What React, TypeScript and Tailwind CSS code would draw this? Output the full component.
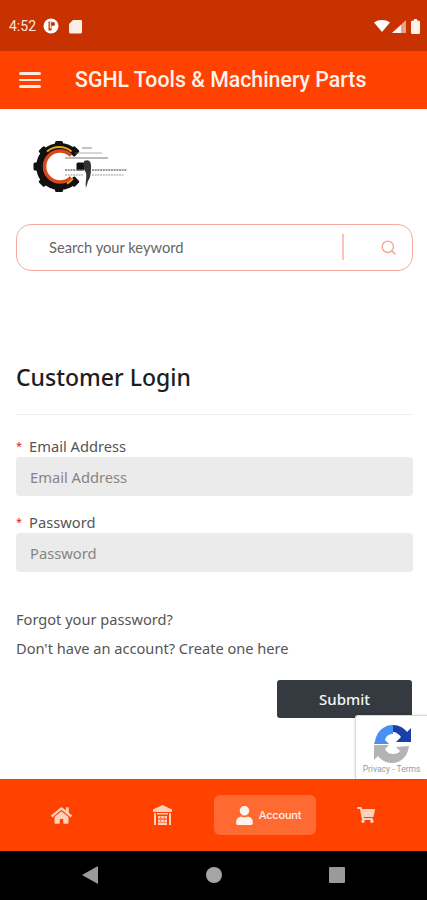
import { FaHome, FaShoppingCart, FaUser } from "react-icons/fa";
import { FiSearch } from "react-icons/fi";

function StatusLeftIcons() {
  return (
    <div className="flex items-center gap-[10px]">
      <svg width="16" height="16" viewBox="0 0 16 16">
        <circle cx="8" cy="8" r="7.5" fill="#fff" />
        <path d="M5.5 3.5h3v9h-3z" fill="#c83200" />
        <circle cx="10" cy="6" r="2" fill="#c83200" />
        <path d="M6.8 3.5h1v7h-1z" fill="#fff" />
      </svg>
      <svg width="13" height="15" viewBox="0 0 13 15">
        <path d="M4 1h8a1 1 0 0 1 1 1v11a1.5 1.5 0 0 1-1.5 1.5h-10A1.5 1.5 0 0 1 0 13V5z" fill="#fbeee8" />
      </svg>
    </div>
  );
}

function StatusRightIcons() {
  return (
    <div className="flex items-center gap-[2px]">
      <svg width="16" height="12" viewBox="0 0 16 12">
        <path d="M0 2.5C4.5-.8 11.5-.8 16 2.5L8 12z" fill="#fff" />
      </svg>
      <svg width="14" height="13" viewBox="0 0 14 13">
        <path d="M14 0v13H0z" fill="#fff" fillOpacity="0.55" />
        <path d="M9 5v8H0z" fill="#fff" fillOpacity="0.9" />
      </svg>
      <svg width="9" height="15" viewBox="0 0 9 15" className="ml-[3px]">
        <path d="M3 0h3v1.5h1.5A1.5 1.5 0 0 1 9 3v10.5A1.5 1.5 0 0 1 7.5 15h-6A1.5 1.5 0 0 1 0 13.5V3a1.5 1.5 0 0 1 1.5-1.5H3z" fill="#fdf1ec" />
      </svg>
    </div>
  );
}

function Logo() {
  return (
    <svg width="100" height="56" viewBox="0 0 100 56">
      <g transform="translate(29 29.5)">
        {[0, 45, 90, 135, 180, 225, 270, 315].map((a) => (
          <rect key={a} x="-4" y="-25.5" width="8" height="8" rx="1.5" fill="#111" transform={`rotate(${a})`} />
        ))}
        <path d="M15 -14 A20 20 0 1 0 15 14" fill="none" stroke="#111" strokeWidth="7" />
        <path d="M12 -11 A15.5 15.5 0 1 0 12 11" fill="none" stroke="#d9481a" strokeWidth="3.5" />
        <path d="M12.5 -15 A19 19 0 0 0 -12 -15" fill="none" stroke="#eda41c" strokeWidth="2.2" />
        <path d="M8 17 A18 18 0 0 0 14 12" fill="none" stroke="#eda41c" strokeWidth="2" />
      </g>
      <path d="M52 11h10" stroke="#555" strokeWidth="1" opacity="0.7" />
      <path d="M45 16h27" stroke="#777" strokeWidth="1" opacity="0.6" />
      <path d="M35 21h43" stroke="#444" strokeWidth="1" opacity="0.7" />
      <path d="M54 24c5-2 7 0 7 5 0 6 0 11-3 15l-2 7c-1-6 1-10 0-15-2-3-3-8-2-12z" fill="#333" />
      <path d="M35 33h18M62 33h35" stroke="#777" strokeWidth="1.3" strokeDasharray="2 0.7" />
      <path d="M35 38h18M62 38h32" stroke="#888" strokeWidth="1.2" strokeDasharray="2 0.7" opacity="0.8" />
    </svg>
  );
}

function Warehouse() {
  return (
    <svg width="19" height="20" viewBox="0 0 19 20" fill="#ffd0bd">
      <path d="M9.5 0 19 4.5V7H0V4.5z" />
      <path d="M1 8h2v12H1zM16 8h2v12h-2zM4 8h11v1.5H4z" />
      <path d="M5 11h2.6v2.6H5zM8.2 11h2.6v2.6H8.2zM11.4 11h2.6v2.6h-2.6zM5 14.4h2.6V17H5zM8.2 14.4h2.6V17H8.2zM11.4 14.4h2.6V17h-2.6zM5 17.4h9V20H5z" />
    </svg>
  );
}

function Field({ label }: { label: string }) {
  return (
    <div className="flex flex-col">
      <label className="flex h-[21px] items-center text-[14.7px] leading-[21px] text-[#555]">
        <span className="mb-[3px] w-[13px] text-[11px] leading-none text-[#e02020]">*</span>
        {label}
      </label>
      <input
        readOnly
        placeholder={label}
        className="h-[39px] w-full rounded-[4px] bg-[#ebebeb] px-[14px] text-[14.7px] text-[#777] placeholder:text-[#858585]"
      />
    </div>
  );
}

export default function App() {
  return (
    <div className="flex h-[900px] w-[427px] flex-col overflow-hidden bg-white font-['Noto_Sans',sans-serif]">
      <div className="flex h-[51px] items-center justify-between bg-[#c83200] pl-[9px] pr-[7px] pt-[1px] font-['Roboto',sans-serif]">
        <div className="flex items-center gap-[7px]">
          <span className="text-[14px] text-[#fbe3da]">4:52</span>
          <StatusLeftIcons />
        </div>
        <StatusRightIcons />
      </div>

      <header className="flex h-[58px] items-center bg-[#ff4200] pl-[19px] font-['Roboto',sans-serif]">
        <div className="flex w-[22px] flex-col gap-[4px]">
          <div className="h-[2.5px] rounded-full bg-[#ffe9e0]" />
          <div className="h-[2.5px] rounded-full bg-[#ffe9e0]" />
          <div className="h-[2.5px] rounded-full bg-[#ffe9e0]" />
        </div>
        <h1 className="ml-[34px] text-[21.3px] font-medium text-[#fff1eb]">SGHL Tools &amp; Machinery Parts</h1>
      </header>

      <main className="flex flex-1 flex-col pl-[16px] pr-[14px]">
        <div className="ml-[14px] mt-[28px]">
          <Logo />
        </div>
        <div className="mt-[31px] flex h-[47px] items-center rounded-[15px] border-[1.5px] border-[#f9aaa0] pb-[1px] pl-[32px] pr-[15px] font-['Lato',sans-serif]">
          <span className="flex-1 text-[14.7px] text-[#666]">Search your keyword</span>
          <div className="mr-[36px] h-[26px] w-[2px] bg-[#fbc4b8]" />
          <FiSearch className="text-[#f9a595]" size={17} />
        </div>

        <h2 className="mt-[88px] text-[23px] leading-[36px] font-medium text-[#1d1d1d]">Customer Login</h2>
        <div className="mt-[19px] h-px bg-[#eeeeee]" />

        <div className="mt-[21px] flex flex-col gap-[16px]">
          <Field label="Email Address" />
          <Field label="Password" />
        </div>

        <p className="mt-[36px] text-[14.6px] leading-[22px] text-[#555]">Forgot your password?</p>
        <p className="mt-[7px] text-[14.6px] leading-[22px] text-[#555]">Don't have an account? Create one here</p>

        <div className="mt-[21px] flex justify-end pr-[1px]">
          <button className="h-[38px] w-[135px] rounded-[3px] bg-[#343a40] text-[15px] font-medium text-[#f5f5f5]">Submit</button>
        </div>
      </main>

      <nav className="relative flex h-[72px] items-center bg-[#ff4200] font-['Inter',sans-serif]">
        <div className="absolute bottom-full right-0 flex h-[64px] w-[72px] flex-col items-center rounded-tl-[3px] border-l border-t border-[#d8d8d8] bg-white pt-[7px] shadow-[0_0_3px_rgba(0,0,0,0.15)]">
          <svg width="40" height="42" viewBox="0 0 40 42">
            <path d="M3 18C5 8 12 2 21 2v9c-4 0-7 2-8 6l4 4H2z" fill="#4a90f0" />
            <path d="M21 2c6 0 11 3 14 7l4-4v14H24l5-5c-2-3-5-5-8-5z" fill="#1a3fa8" />
            <path d="M2 22h15l-4 4c2 4 5 5 8 5 3 0 6-1 7-3l-4-4 13-1c-1 10-8 17-17 17-6 0-11-3-14-7l-4 4z" fill="#b4b4b4" />
          </svg>
          <span className="whitespace-nowrap font-['Roboto',sans-serif] text-[8.5px] leading-[9px] text-[#9a9a9a]">Privacy - Terms</span>
        </div>
        <div className="flex w-[122px] justify-center">
          <FaHome size={21} className="text-[#ffd0bd]" />
        </div>
        <div className="flex w-[81px] justify-center">
          <Warehouse />
        </div>
        <div className="ml-[11px] flex h-[40px] w-[102px] items-center justify-center gap-[5px] rounded-[6px] bg-[#ff6a33] pl-[6px]">
          <FaUser size={19} className="text-[#fff1eb]" />
          <span className="text-[11px] font-medium tracking-[-0.2px] text-[#fff1eb]">Account</span>
        </div>
        <div className="flex flex-1 justify-center pr-[11px]">
          <FaShoppingCart size={18} className="text-[#ffd0bd]" />
        </div>
      </nav>

      <div className="flex h-[49px] items-center bg-black pb-[1px]">
        <div className="flex w-[180px] justify-end pr-[82px]">
          <svg width="16" height="18" viewBox="0 0 16 18"><path d="M16 0v18L0 9z" fill="#9a9a9a" /></svg>
        </div>
        <div className="ml-[26px] h-[16px] w-[16px] rounded-full bg-[#a5a5a5]" />
        <div className="ml-[107px] h-[16px] w-[16px] rounded-[1px] bg-[#9a9a9a]" />
      </div>
    </div>
  );
}
